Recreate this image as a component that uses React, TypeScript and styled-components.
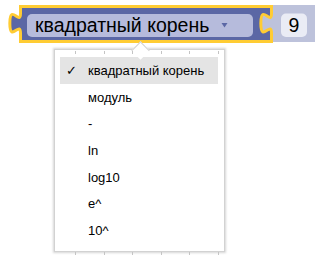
import React from 'react'
import styled, { createGlobalStyle } from 'styled-components'

const GlobalStyle = createGlobalStyle`
  html, body {
    margin: 0;
    padding: 0;
    background: #fff;
  }
`

const items = ['квадратный корень', 'модуль', '-', 'ln', 'log10', 'e^', '10^']
const ticks = [0, 1, 2, 3, 4, 5]

// blockly puzzle tab, going down from the current point
const tabDown = 'c 0,13.33 -10.67,-10.67 -10.67,10 s 10.67,-3.33 10.67,10'
const tabUpLeft = 'C 20.5,19.84 9.83,43.84 9.83,23.17 C 9.83,2.5 20.5,26.5 20.5,13.17'

const parentPath = `M 20.5,6.5 H 271.5 V 13.17 ${tabDown} V 41.5 H 20.5 V 33.17 ${tabUpLeft} Z`
const childPath = `M 271.5,5 H 315 V 42 H 271.5 V 33.17 C 271.5,19.84 260.83,43.84 260.83,23.17 C 260.83,2.5 271.5,26.5 271.5,13.17 Z`

const App = () => {
  return (
    <Stage>
      <GlobalStyle />
      <BlockSvg width="321" height="48" viewBox="0 0 321 48">
        <path d={parentPath} fill="#5b67a5" />
        <path d={childPath} fill="#bdc2db" />
        <rect x="27" y="14" width="226" height="23" rx="5" fill="#b6bbdc" />
        <FieldText x="35" y="32">квадратный корень</FieldText>
        <polygon points="221.5,23 227.5,23 224.5,27.5" fill="#5b67a5" />
        <rect x="281" y="13.5" width="26" height="23.5" rx="5" fill="#eaecf5" />
        <FieldText x="294" y="32" textAnchor="middle">9</FieldText>
        <path d={parentPath} fill="none" stroke="#fc3" strokeWidth="3" />
      </BlockSvg>
      <Menu>
        <Arrow />
        <TickRow $bottom={false}>
          {ticks.map(t => <Tick key={t} />)}
        </TickRow>
        <TickRow $bottom>
          {ticks.map(t => <Tick key={t} />)}
        </TickRow>
        {items.map((label, i) => (
          <Item key={label} $active={i === 0}>
            <Check>{i === 0 ? '✓' : ''}</Check>
            <span>{label}</span>
          </Item>
        ))}
      </Menu>
    </Stage>
  )
}

export default App

const Stage = styled.div`
  position: relative;
  width: 321px;
  height: 262px;
  overflow: hidden;
  background: #fff;
  font-family: "Liberation Sans", Arial, sans-serif;
`

const BlockSvg = styled.svg`
  display: block;
`

const FieldText = styled.text`
  font-family: "Liberation Sans", Arial, sans-serif;
  font-size: 19.5px;
  fill: #000;
`

const Menu = styled.div`
  position: absolute;
  left: 54px;
  top: 49px;
  width: 171px;
  box-sizing: border-box;
  display: flex;
  flex-direction: column;
  background: #fff;
  border: 1px solid #d2d2d2;
  box-shadow: 0 0 2px 1px rgba(0, 0, 0, 0.16);
  padding: 7px 6px 7px 5px;
`

const Arrow = styled.div`
  position: absolute;
  top: -6px;
  left: 79px;
  width: 12px;
  height: 12px;
  background: #fff;
  border-top: 1px solid #d2d2d2;
  border-left: 1px solid #d2d2d2;
  transform: rotate(45deg);
`

const TickRow = styled.div<{ $bottom: boolean }>`
  position: absolute;
  left: 20px;
  display: flex;
  gap: 27.6px;
  ${p => (p.$bottom ? 'bottom: -4px;' : 'top: 1px;')}
`

const Tick = styled.span`
  width: 1px;
  height: 3px;
  background: #c4c4c4;
`

const Item = styled.div<{ $active?: boolean }>`
  height: 26.7px;
  display: grid;
  grid-template-columns: 22px 1fr;
  align-items: center;
  padding-left: 6px;
  font-size: 13px;
  color: #000;
  white-space: nowrap;
  background: ${p => (p.$active ? '#e4e4e4' : 'transparent')};
`

const Check = styled.span`
  font-family: "DejaVu Sans", sans-serif;
  font-size: 13px;
`
